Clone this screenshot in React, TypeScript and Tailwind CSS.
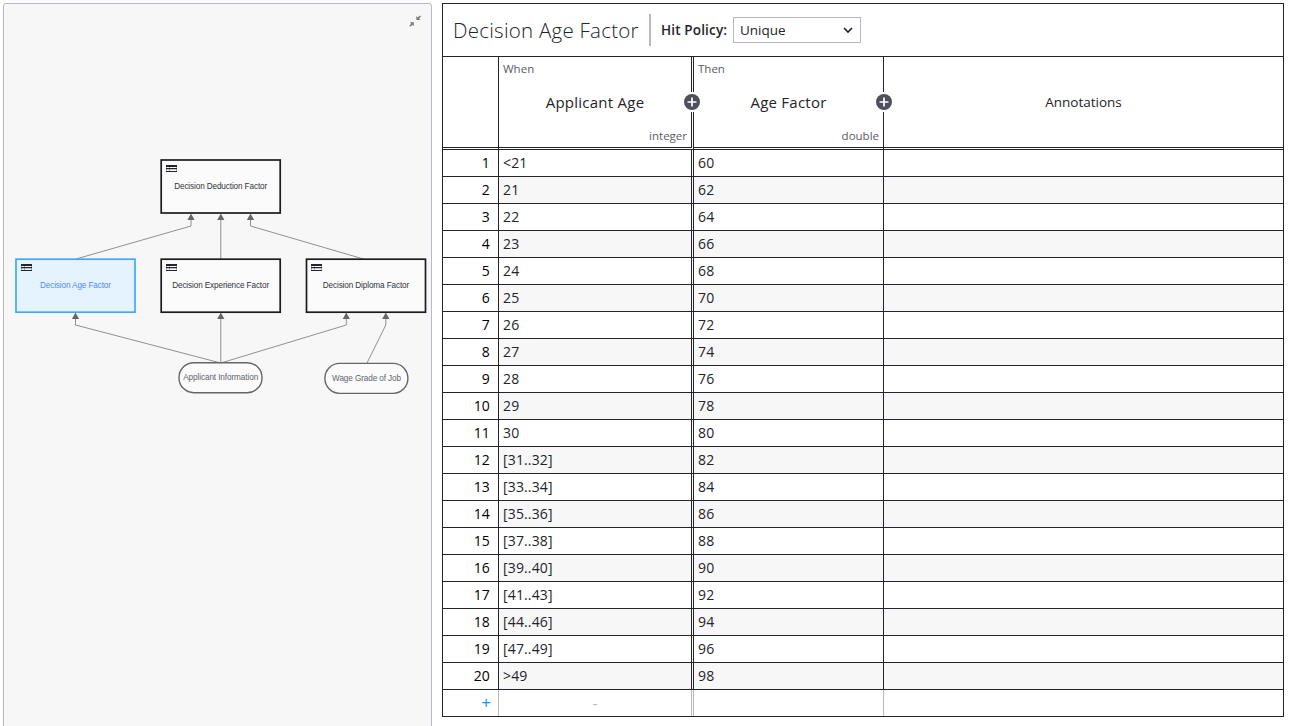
import React from "react";

type Row = { input: string; output: string };

const rows: Row[] = [
  ["<21", "60"], ["21", "62"], ["22", "64"], ["23", "66"], ["24", "68"],
  ["25", "70"], ["26", "72"], ["27", "74"], ["28", "76"], ["29", "78"],
  ["30", "80"], ["[31..32]", "82"], ["[33..34]", "84"], ["[35..36]", "86"],
  ["[37..38]", "88"], ["[39..40]", "90"], ["[41..43]", "92"],
  ["[44..46]", "94"], ["[47..49]", "96"], [">49", "98"],
].map(([input, output]) => ({ input, output }));

const columns = "grid grid-cols-[55px_196px_190px_399px]";

function Decision({ x, y, label, width, active = false }: { x: number; y: number; label: string; width: number; active?: boolean }) {
  return (
    <g transform={`translate(${x} ${y})`}>
      <rect width="119" height="53" strokeWidth="1.7" className={active ? "fill-[#e5f3ff] stroke-[#42a9f8]" : "fill-[#fbfbfb] stroke-[#1c1c1e]"} />
      <g className="fill-[#22242a]" transform={`translate(${Math.floor(x) - x} ${Math.floor(y) - y})`}>
        <path d="M5 5h11v2H5zM5 8h11v1H5zM5 11h11v1H5z" />
        <path d="M5 7h1v5H5zM8 7h1v5H8zM15 7h1v5H15z" opacity="0.35" />
        <path d="M5 9h11v1H5z" opacity="0.25" />
      </g>
      <text x="59.5" y="28.9" textAnchor="middle" textLength={width} className={active ? "fill-[#4d8df6] text-[8.2px]" : "fill-[#33343a] text-[8.2px]"}>{label}</text>
    </g>
  );
}

function InputData({ x, y, label, width }: { x: number; y: number; label: string; width: number }) {
  return (
    <g transform={`translate(${x} ${y})`}>
      <rect width="83" height="30" rx="14.8" strokeWidth="1.4" className="fill-[#fbfbfb] stroke-[#666]" />
      <text x="41.7" y="17.5" textAnchor="middle" textLength={width} className="fill-[#62636c] text-[8.2px]">{label}</text>
    </g>
  );
}

function Diagram() {
  const arrows = [[191, 213], [220.8, 213], [250.5, 213], [75.5, 312], [220.8, 312], [346.3, 312], [385.8, 312]];
  return (
    <svg width="427" height="722" viewBox="4 4 427 722" className="block font-['Liberation_Sans',sans-serif]">
      <g fill="none" strokeWidth="0.9" className="stroke-[#858585]">
        <path d="M76 259L191 226V216" />
        <path d="M220.8 259V216" />
        <path d="M363.5 259L250.5 226V216" />
        <path d="M220.8 363L75.5 325V315" />
        <path d="M220.8 363V315" />
        <path d="M220.8 363L346.3 325V315" />
        <path d="M367 363L385.8 325V315" />
      </g>
      <Decision x={161.2} y={160} label="Decision Deduction Factor" width={93} />
      <Decision x={16} y={259.2} label="Decision Age Factor" width={71} active />
      <Decision x={161.2} y={259.2} label="Decision Experience Factor" width={97} />
      <Decision x={306.5} y={259.2} label="Decision Diploma Factor" width={86.5} />
      <InputData x={179} y={362.7} label="Applicant Information" width={75} />
      <InputData x={324.9} y={363.4} label="Wage Grade of Job" width={69} />
      {arrows.map(([x, y]) => (
        <path key={`${x}-${y}`} d={`M${x} ${y + 0.5}l3.6 6.5h-7.2z`} className="fill-[#666]" />
      ))}
    </svg>
  );
}

function AddButton() {
  return (
    <span className="absolute top-[35px] -right-[9px] z-10 flex h-5 w-4 items-center justify-center bg-white">
      <svg width="16" height="16" viewBox="0 0 16 16" className="shrink-0">
        <circle cx="8" cy="8" r="8" fill="#4d505c" />
        <path d="M8 3.5v9M3.5 8h9" stroke="white" strokeWidth="1.7" />
      </svg>
    </span>
  );
}

export default function App() {
  return (
    <div className="flex h-[726px] w-[1300px] items-start overflow-hidden bg-white pl-[3px] pt-[3px] font-['Open_Sans',sans-serif] text-[#22242a]">
      <section className="relative h-[740px] w-[429px] shrink-0 overflow-hidden rounded-[3px] border border-[#b8b8c6] bg-[#f7f7f7]">
        <Diagram />
        <svg width="14" height="14" viewBox="0 0 14 14" className="absolute left-[404px] top-[10px] fill-[#777] stroke-[#777]">
          <path d="M8.4 2V6H12.4zM5.8 12.2V8.2H1.8z" stroke="none" />
          <path d="M9.8 4.6l2.6-2.6M4.4 9.6l-2.6 2.6" fill="none" strokeWidth="1.5" />
        </svg>
      </section>
      <main className="ml-[10px] w-[842px] shrink-0 border border-[#22242a]">
        <header className="flex h-[53px] items-center border-b border-[#22242a] pl-[10px]">
          <h1 className="w-[196px] whitespace-nowrap text-[20.5px] font-light leading-[30px] tracking-[0.25px]">Decision Age Factor</h1>
          <div className="flex h-8 items-center border-l-2 border-[#b8b8c6] pl-[10px]">
            <span className="w-[72px] whitespace-nowrap pt-px text-[13.5px] font-semibold tracking-[0.15px]">Hit Policy:</span>
            <div className="flex h-[26px] w-32 items-center justify-between border border-[#b8b8c6] pl-[6px] pr-[7px] text-[13.5px]">
              <span>Unique</span>
              <svg width="10" height="8" viewBox="0 0 10 8" fill="none" stroke="#22242a" strokeWidth="1.7"><path d="M1 2l4 4 4-4" /></svg>
            </div>
          </div>
        </header>
        <div className={`${columns} h-[93px]`}>
          <div className="border-b-3 border-double border-[#22242a]" />
          <div className="relative flex flex-col justify-between border-b-3 border-l border-r-3 border-double border-[#22242a] [border-left-style:solid] px-1 pb-[3px] pt-1">
            <span className="text-[11.5px] leading-4 text-[#5a5c66]">When</span>
            <span className="pb-px text-center text-[15px] leading-5 tracking-[0.25px]">Applicant Age</span>
            <span className="text-right text-[11.5px] leading-4 text-[#5a5c66]">integer</span>
            <AddButton />
          </div>
          <div className="relative flex flex-col justify-between border-b-3 border-r border-double border-[#22242a] [border-right-style:solid] px-1 pb-[3px] pt-1">
            <span className="text-[11.5px] leading-4 text-[#5a5c66]">Then</span>
            <span className="pb-px text-center text-[15px] leading-5 tracking-[0.25px]">Age Factor</span>
            <span className="text-right text-[11.5px] leading-4 text-[#5a5c66]">double</span>
            <AddButton />
          </div>
          <div className="flex items-center justify-center border-b-3 border-double border-[#22242a] text-[13.5px]">Annotations</div>
        </div>
        {rows.map((row, i) => (
          <div key={row.input} className={`${columns} h-[27px] border-b border-[#22242a] text-[14px] leading-[26px] tracking-[0.15px] ${i % 2 ? "bg-[#f7f7f7]" : "bg-white"}`}>
            <div className="bg-white pr-2 text-right text-black">{i + 1}</div>
            <div className="border-l border-r-3 border-[#22242a] [border-right-style:double] pl-1">{row.input}</div>
            <div className="border-r border-[#22242a] pl-1">{row.output}</div>
            <div />
          </div>
        ))}
        <div className={`${columns} h-[26px] leading-[26px]`}>
          <div className="pr-[7px] text-right text-[17px] text-[#1890ff]">+</div>
          <div className="border-l border-r-3 border-[#b8b8c6] [border-right-style:double] text-center text-[16px] text-[#b8b8c6]">-</div>
          <div className="border-r border-[#b8b8c6]" />
          <div />
        </div>
      </main>
    </div>
  );
}
